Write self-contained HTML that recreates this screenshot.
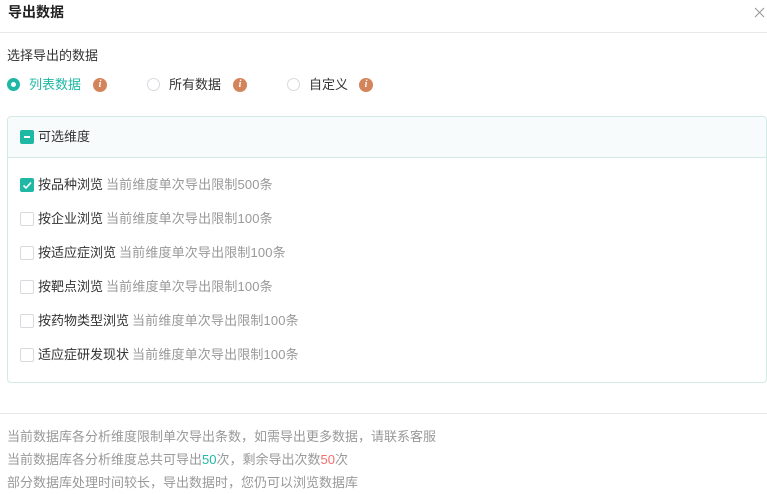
<!DOCTYPE html>
<html><head><meta charset="utf-8"><style>
*{margin:0;padding:0;box-sizing:border-box}
body{width:767px;height:494px;background:#fff;font-family:"Liberation Sans","Noto Sans CJK SC",sans-serif;color:#333;font-size:13px;position:relative;overflow:hidden}
.a{position:absolute;white-space:nowrap;line-height:18px}
.t{left:8px;top:3px;font-size:14px;font-weight:bold;color:#222}
.hr{position:absolute;left:0;width:767px;height:1px;background:#e8e8e8}
.r{position:absolute;width:13px;height:13px;border:1px solid #d9d9e0;border-radius:50%;top:78px}
.r.on{border:4px solid #1fb8a5}
.i{position:absolute;top:78px;width:14px;height:14px;border-radius:50%;background:#d4845a;color:#fff;font-size:10px;font-weight:bold;text-align:center;line-height:14px;font-family:"Liberation Serif",serif;font-style:italic}
.box{position:absolute;left:7px;top:116px;width:760px;height:267px;border:1px solid #d4e8e5;border-radius:4px;overflow:hidden}
.bh{height:41px;background:#f7fbfb;border-bottom:1px solid #d4e8e5}
.cb{position:absolute;width:14px;height:14px;border:1px solid #d9d9e0;border-radius:2px;left:20px}
.cb.on{background:#1fb8a5;border-color:#1fb8a5}
.g{color:#999;margin-left:3px;letter-spacing:0.15px}
.f{color:#999;left:7px}
</style></head><body>
<div class="a t">导出数据</div>
<svg style="position:absolute;left:754px;top:7px" width="11" height="11"><path d="M1 1L10 10M10 1L1 10" stroke="#999" stroke-width="1.1"/></svg>
<div class="hr" style="top:32px"></div>
<div class="a" style="left:7px;top:47px">选择导出的数据</div>
<div class="r on" style="left:7px"></div>
<div class="a" style="left:29px;top:76px;color:#1fb8a5">列表数据</div>
<div class="i" style="left:93px">i</div>
<div class="r" style="left:147px"></div>
<div class="a" style="left:169px;top:76px">所有数据</div>
<div class="i" style="left:233px">i</div>
<div class="r" style="left:287px"></div>
<div class="a" style="left:309px;top:76px">自定义</div>
<div class="i" style="left:359px">i</div>
<div class="box"><div class="bh"></div></div>
<div class="cb on" style="top:130px"><div style="position:absolute;left:3px;top:5px;width:6px;height:2px;background:#fff"></div></div>
<div class="a" style="left:38px;top:128px">可选维度</div>
<div class="cb on" style="top:178px"><svg width="12" height="12" style="position:absolute;left:0;top:0"><path d="M2.5 6.5 L5 9 L10 3.5" stroke="#fff" stroke-width="1.6" fill="none"/></svg></div>
<div class="a" style="left:38px;top:176px">按品种浏览<span class="g">当前维度单次导出限制500条</span></div>
<div class="cb" style="top:212px"></div>
<div class="a" style="left:38px;top:210px">按企业浏览<span class="g">当前维度单次导出限制100条</span></div>
<div class="cb" style="top:246px"></div>
<div class="a" style="left:38px;top:244px">按适应症浏览<span class="g">当前维度单次导出限制100条</span></div>
<div class="cb" style="top:280px"></div>
<div class="a" style="left:38px;top:278px">按靶点浏览<span class="g">当前维度单次导出限制100条</span></div>
<div class="cb" style="top:314px"></div>
<div class="a" style="left:38px;top:312px">按药物类型浏览<span class="g">当前维度单次导出限制100条</span></div>
<div class="cb" style="top:348px"></div>
<div class="a" style="left:38px;top:346px">适应症研发现状<span class="g">当前维度单次导出限制100条</span></div>
<div class="hr" style="top:413px"></div>
<div class="a f" style="top:428px">当前数据库各分析维度限制单次导出条数，如需导出更多数据，请联系客服</div>
<div class="a f" style="top:451px">当前数据库各分析维度总共可导出<span style="color:#1fb8a5">50</span>次，剩余导出次数<span style="color:#f56c6c">50</span>次</div>
<div class="a f" style="top:474px">部分数据库处理时间较长，导出数据时，您仍可以浏览数据库</div>
</body></html>
